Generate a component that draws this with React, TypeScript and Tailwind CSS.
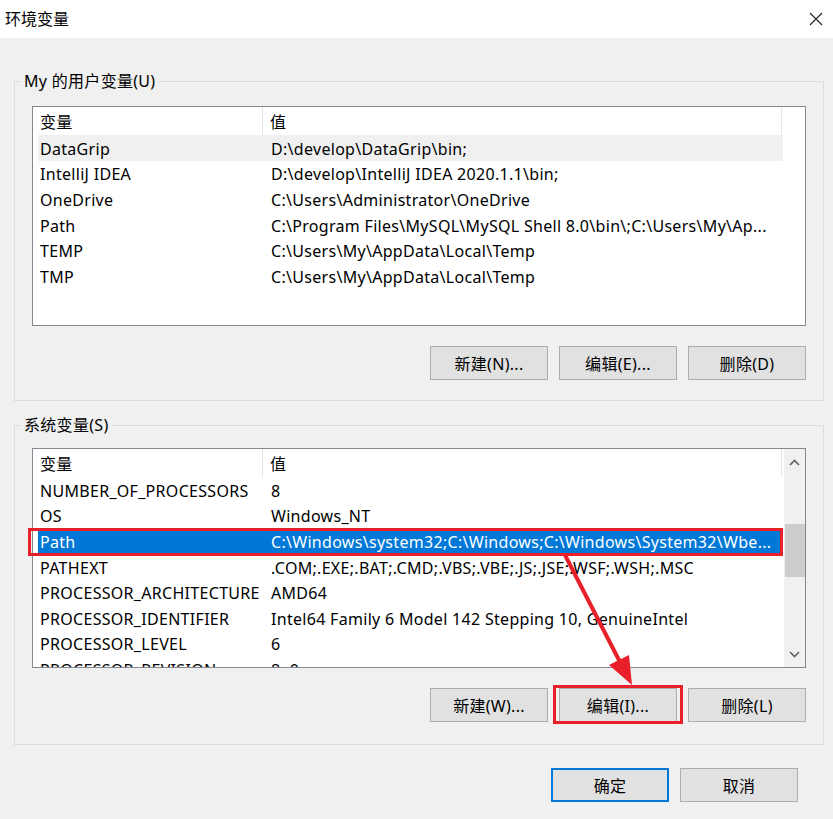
import React from 'react';

// Windows "环境变量" dialog

type Row = { name: string; value: string };

const userVars: Row[] = [
  { name: 'DataGrip', value: 'D:\\develop\\DataGrip\\bin;' },
  { name: 'IntelliJ IDEA', value: 'D:\\develop\\IntelliJ IDEA 2020.1.1\\bin;' },
  { name: 'OneDrive', value: 'C:\\Users\\Administrator\\OneDrive' },
  { name: 'Path', value: 'C:\\Program Files\\MySQL\\MySQL Shell 8.0\\bin\\;C:\\Users\\My\\Ap...' },
  { name: 'TEMP', value: 'C:\\Users\\My\\AppData\\Local\\Temp' },
  { name: 'TMP', value: 'C:\\Users\\My\\AppData\\Local\\Temp' },
];

const systemVars: Row[] = [
  { name: 'NUMBER_OF_PROCESSORS', value: '8' },
  { name: 'OS', value: 'Windows_NT' },
  { name: 'Path', value: 'C:\\Windows\\system32;C:\\Windows;C:\\Windows\\System32\\Wbe...' },
  { name: 'PATHEXT', value: '.COM;.EXE;.BAT;.CMD;.VBS;.VBE;.JS;.JSE;.WSF;.WSH;.MSC' },
  { name: 'PROCESSOR_ARCHITECTURE', value: 'AMD64' },
  { name: 'PROCESSOR_IDENTIFIER', value: 'Intel64 Family 6 Model 142 Stepping 10, GenuineIntel' },
  { name: 'PROCESSOR_LEVEL', value: '6' },
  { name: 'PROCESSOR_REVISION', value: '8e0a' },
];

const Button = ({ label, primary }: { label: string; primary?: boolean }) => (
  <div
    className={`w-[118px] h-[34px] pt-[2px] flex items-center justify-center bg-[#e1e1e1] text-black ${
      primary ? 'border-2 border-[#0078d7]' : 'border border-[#adadad]'
    }`}
  >
    {label}
  </div>
);

const ListHeader = () => (
  <div className="flex h-[28px] shrink-0 items-center">
    <div className="w-[230px] h-full pt-[2px] flex items-center pl-[7px] border-r border-[#e5e5e5]">变量</div>
    <div className="w-[519px] h-full pt-[2px] flex items-center pl-[7px] border-r border-[#e5e5e5]">值</div>
  </div>
);

const ListRow = ({ row, state }: { row: Row; state?: 'hover' | 'selected' }) => {
  const bg = state === 'selected' ? 'bg-[#0078d7] text-white' : state === 'hover' ? 'bg-[#f0f0f0]' : '';
  return (
    <div className={`ml-[5px] w-[745px] h-[25.6px] pt-[2px] shrink-0 flex items-center whitespace-nowrap ${bg}`}>
      <div className="w-[225px] pl-[2px] overflow-hidden">{row.name}</div>
      <div className="flex-1 pl-[8px] overflow-hidden">{row.value}</div>
    </div>
  );
};

const Chevron = ({ up }: { up?: boolean }) => (
  <svg width="11" height="7" viewBox="0 0 11 7">
    <path
      d={up ? 'M1 6 L5.5 1.5 L10 6' : 'M1 1 L5.5 5.5 L10 1'}
      fill="none"
      stroke="#606060"
      strokeWidth="1.6"
    />
  </svg>
);

const GroupBox = ({
  title,
  children,
  className,
}: {
  title: string;
  children: React.ReactNode;
  className?: string;
}) => (
  <fieldset className={`border border-[#dcdcdc] px-[5px] ${className ?? ''}`}>
    <legend className="px-[4px] leading-[20px] text-black">{title}</legend>
    {children}
  </fieldset>
);

export default function App() {
  return (
    <div
      className="relative w-[833px] h-[819px] bg-[#f0f0f0] overflow-hidden text-[16px] tracking-[0.3px] text-black"
      style={{ fontFamily: '"Noto Sans", "Noto Sans CJK SC", sans-serif' }}
    >
      {/* title bar */}
      <div className="h-[38px] bg-white flex items-center justify-between pl-[5px] pr-[10px]">
        <span className="text-[16px] tracking-normal">环境变量</span>
        <svg width="14" height="14" viewBox="0 0 14 14">
          <path d="M1 1 L13 13 M13 1 L1 13" stroke="#222" strokeWidth="1.1" />
        </svg>
      </div>

      <div className="pl-[14px] pr-[9px]">
        {/* user variables */}
        <GroupBox title="My 的用户变量(U)" className="mt-[33px]">
          <div className="pl-[12px] pr-[12px] pt-[15px] pb-[20px]">
            <div className="h-[220px] bg-white border border-[#828790] flex flex-col overflow-hidden">
              <ListHeader />
              {userVars.map((r, i) => (
                <ListRow key={r.name} row={r} state={i === 0 ? 'hover' : undefined} />
              ))}
            </div>
            <div className="mt-[20px] flex justify-end gap-[11px]">
              <Button label="新建(N)..." />
              <Button label="编辑(E)..." />
              <Button label="删除(D)" />
            </div>
          </div>
        </GroupBox>

        {/* system variables */}
        <GroupBox title="系统变量(S)" className="mt-[14px]">
          <div className="pl-[12px] pr-[12px] pt-[13px] pb-[22px]">
            <div className="h-[220px] bg-white border border-[#828790] flex overflow-hidden">
              <div className="flex-1 flex flex-col overflow-hidden">
                <ListHeader />
                {systemVars.map((r, i) => (
                  <ListRow key={r.name} row={r} state={i === 2 ? 'selected' : undefined} />
                ))}
              </div>
              <div className="w-[21px] bg-[#f0f0f0] flex flex-col items-center">
                <div className="h-[26px] flex items-center justify-center">
                  <Chevron up />
                </div>
                <div className="mt-[49px] w-[20px] h-[53px] bg-[#cdcdcd]" />
                <div className="flex-1" />
                <div className="h-[26px] flex items-center justify-center">
                  <Chevron />
                </div>
              </div>
            </div>
            <div className="mt-[20px] flex justify-end gap-[11px]">
              <Button label="新建(W)..." />
              <Button label="编辑(I)..." />
              <Button label="删除(L)" />
            </div>
          </div>
        </GroupBox>
      </div>

      {/* dialog buttons */}
      <div className="mt-[23px] flex justify-end gap-[11px] pr-[35px]">
        <Button label="确定" primary />
        <Button label="取消" />
      </div>

      {/* red annotations */}
      <div className="absolute left-[28px] top-[528px] w-[755px] h-[28px] border-[3px] border-[#e8202a]" />
      <div className="absolute left-[553px] top-[685px] w-[130px] h-[39px] border-[3px] border-[#e8202a]" />
      <svg className="absolute left-0 top-0 pointer-events-none" width="833" height="819">
        <line x1="565" y1="555" x2="622" y2="666" stroke="#e8202a" strokeWidth="4" />
        <polygon points="632,685 609,665 629,655" fill="#e8202a" />
      </svg>
    </div>
  );
}
